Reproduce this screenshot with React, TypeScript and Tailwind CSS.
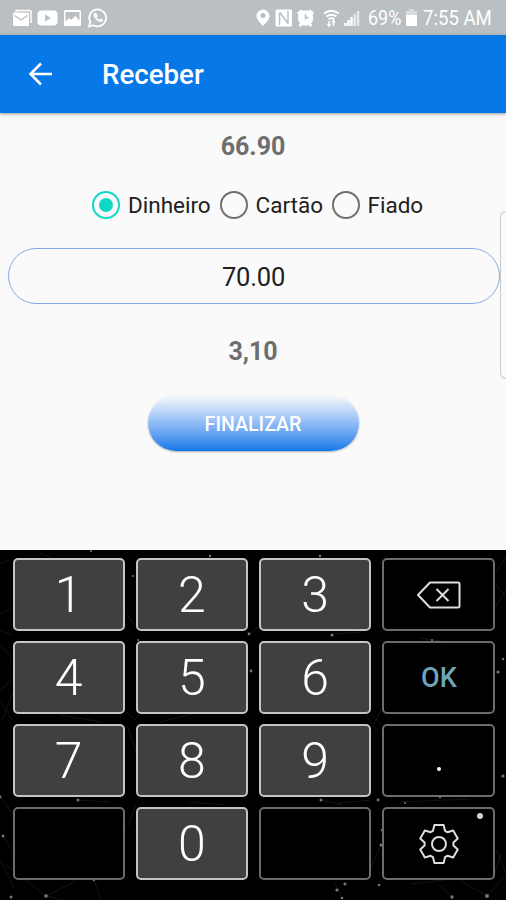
import type { ReactNode } from 'react';

// ────────────────────────────────────────────
// Status bar
// ────────────────────────────────────────────

function StatusBar() {
  return (
    <div className="flex h-[35px] shrink-0 items-center bg-[#babfc3] pl-3 text-white">
      <svg width="98" height="24" viewBox="0 0 98 24" className="shrink-0" fill="none">
        {/* mail */}
        <path d="M4 6V4.500h14q1 0 1 1V17" stroke="#fff" strokeWidth="1.500" />
        <rect x="1" y="6.500" width="16" height="13.500" rx="1" fill="#fff" />
        <path d="M2.500 9.500L9 14l6.500-4.500" stroke="#babfc3" strokeWidth="1.300" />
        {/* video */}
        <rect x="25.500" y="4.500" width="20" height="15" rx="4" fill="#fff" />
        <path d="M33 8.500v7l6-3.500z" fill="#babfc3" />
        {/* image */}
        <rect x="52" y="4" width="17" height="16" rx="1.500" fill="#fff" />
        <path d="M53.500 6h14v8.500l-4-4.500-4.500 4-2-2-3.500 3.500z" fill="#babfc3" />
        {/* chat */}
        <path d="M77 20.500l1.200-4.700A8.400 8.400 0 1 1 81.500 19.200z" stroke="#fff" strokeWidth="1.800" />
        <path
          d="M82.500 7c-2 1.400-.5 4.500 1.800 6.700 2.200 2 5 3.300 6.500 1.300.8-1.200-.2-1.800-2.300-2.500l-1.200 1.200c-1.300-.6-2-1.300-2.600-2.500l1-1.200c-.6-2-1.700-3.700-3.200-3z"
          fill="#fff"
        />
      </svg>
      <svg width="110" height="24" viewBox="0 0 110 24" className="ml-[144px] shrink-0" fill="none">
        {/* location */}
        <path d="M9 3.500a6.500 6.500 0 0 1 6.500 6.500c0 3.500-3.500 6.500-6.500 10-3-3.500-6.500-6.500-6.500-10A6.500 6.500 0 0 1 9 3.500z" fill="#fff" />
        <circle cx="9" cy="9.500" r="2.500" fill="#babfc3" />
        {/* nfc */}
        <rect x="21.500" y="3.500" width="16.500" height="17" rx="1.500" fill="#fff" />
        <path d="M25.500 19V6.500M34 17.500V5M26 6.500l8 11" stroke="#babfc3" strokeWidth="1.500" />
        {/* alarm */}
        <circle cx="51.500" cy="12" r="7.700" fill="#fff" />
        <path d="M43.800 8l4.500-3.500M59.200 8l-4.500-3.500M45.500 20l3-3M57.500 20l-3-3" stroke="#fff" strokeWidth="3" />
        <path d="M51.500 8v4.500l3-1.500" stroke="#babfc3" strokeWidth="1.500" />
        {/* wifi */}
        <path d="M70 7.500q7.500-5.500 15 0M72.500 10.500q5-3.600 10 0M74.500 13.300q3-2 6 0" stroke="#fff" strokeWidth="1.900" />
        <path d="M75 15v4.500M79.500 14.500v5.500M73.500 18l1.500 2 1.500-2M78 16.500l1.500-2 1.500 2" stroke="#fff" strokeWidth="1.400" />
        {/* signal */}
        <path d="M91.500 20v-3M94.500 20v-6M97.500 20v-9" stroke="#fff" strokeWidth="2.400" />
        <path d="M100.700 20V8M104 20V5" stroke="#fff" strokeOpacity=".65" strokeWidth="2.400" />
      </svg>
      <span className="ml-[4px] w-[35px] shrink-0 origin-left scale-x-[0.9] text-[20px] leading-none">69%</span>
      <svg width="11" height="18" viewBox="0 0 11 18" className="ml-[3px] shrink-0">
        <path d="M3 0h5v2h3v4H0V2h3z" fill="#fff" opacity=".45" />
        <path d="M0 6h11v11H0z" fill="#fff" />
      </svg>
      <span className="ml-[6px] origin-left scale-x-[0.93] whitespace-nowrap text-[20px] leading-none">7:55 AM</span>
    </div>
  );
}

// ────────────────────────────────────────────
// App bar
// ────────────────────────────────────────────

function AppBar() {
  return (
    <header className="z-10 flex h-[78px] shrink-0 items-center bg-[#0678e8] pl-[28px] text-white shadow-[0_1px_3px_rgba(0,0,0,0.4)]">
      <svg width="24" height="24" viewBox="0 0 24 24" fill="none" stroke="#fff" strokeWidth="2.600">
        <path d="M24 12H2.500M13 1.500L2.500 12 13 22.500" />
      </svg>
      <h1 className="ml-[50px] pt-[2px] text-[27.700px] font-medium leading-none">Receber</h1>
    </header>
  );
}

// ────────────────────────────────────────────
// Payment form
// ────────────────────────────────────────────

function Option({ label, checked, width }: { label: string; checked?: boolean; width: string }) {
  return (
    <label className={`flex items-center ${width}`}>
      <span
        className={`flex size-[28px] shrink-0 items-center justify-center rounded-full border-[2.500px] ${
          checked ? 'border-[#10d8c4]' : 'border-[#707070]'
        }`}
      >
        {checked && <span className="size-[14px] rounded-full bg-[#10d8c4]" />}
      </span>
      <span className="ml-[8px] pt-px text-[22.500px] leading-none text-[#202020]">{label}</span>
    </label>
  );
}

function PaymentForm() {
  return (
    <main className="relative flex h-[437px] shrink-0 flex-col items-center bg-[#fafafa]">
      <p className="mt-[21px] text-[25px] font-bold leading-[26px] text-[#6e6e6e]">66.90</p>
      <div className="mt-[31px] flex w-full pl-[92px]">
        <Option label="Dinheiro" width="w-[127.500px]" checked />
        <Option label="Cartão" width="w-[112px]" />
        <Option label="Fiado" width="w-[100px]" />
      </div>
      <div className="ml-px mt-[29px] flex h-[56px] w-[492px] items-center justify-center rounded-full border border-[#86aae8] pt-[3px] text-[25.500px] tracking-[-0.200px] text-[#202020]">
        70.00
      </div>
      <p className="mt-[35px] text-[25px] font-bold leading-[26px] text-[#6e6e6e]">3,10</p>
      <button className="mt-[30px] flex h-[56px] w-[211px] items-center justify-center rounded-full bg-linear-to-b from-[#fafafa] to-[#0678e8] pt-[3px] text-[19.600px] font-medium text-white shadow-[0_1px_2px_rgba(0,0,0,0.3)]">
        FINALIZAR
      </button>
      {/* edge panel handle */}
      <div className="absolute right-0 top-[98px] h-[168px] w-[6px] rounded-l-[6px] border border-r-0 border-[#c9c9c9] bg-[#fafafa]" />
    </main>
  );
}

// ────────────────────────────────────────────
// Keypad
// ────────────────────────────────────────────

const DUST = [
  [91, 1, 1], [210, 6, 1.2], [133, 26, 1], [249, 84, 1.400], [320, 6, 1.200], [332, 85, 1.500],
  [251, 121, 1.400], [498, 122, 1.600], [503, 109, 1.200], [138, 90, 1], [432, 90, 1], [78, 250, 1.500],
  [3, 286, 1.500], [0, 247, 1.400], [321, 250, 1.500], [378, 250, 1.400], [405, 253, 1], [440, 247, 1.200],
  [503, 226, 1.600], [381, 295, 1.500], [382, 280, 1.200], [46, 346, 1.800], [11, 347, 1.500], [94, 330, 1.200],
  [337, 340, 1.600], [345, 334, 1.500], [342, 348, 1.300], [379, 335, 1.300], [452, 347, 1.700], [487, 346, 2],
];

function Dust() {
  return (
    <svg className="absolute inset-0" width="506" height="350" fill="none">
      <path
        d="M0 14l9-4M0 64l12-5M0 80l13 5M0 95l12 13M0 140l13-11M0 152l12 18M2 171L13 142M496 23l10-16M495 58l11-18M496 35l10 12M0 245l13 20M3 286l9 14M0 310l14 28M46 346L5 314M46 346l17 4M46 346l30-15M94 330l7 20M127 64l8 12M126 162l10 8M128 276l8-22M372 165l12 13M374 174l8-15M378 182l-12-17M371 250l-33 3M321 250l22 5M332 84l30-2M249 84l9-7M40 3l17 7M190 252l35 3M78 250l32 2M381 295l-10 22M487 346l-26-15M487 346l19-21M452 347l-13-12M337 340l8-8M342 348l-8-17M496 300l10 23M501 304l-7 22M410 334l35-4M128 177l10 30M60 165l42 7M160 172l32-8M420 88l26 4M400 252l70-3"
        stroke="#fff"
        strokeOpacity=".08"
      />
      {DUST.map(([x, y, r]) => (
        <circle key={`${x}-${y}`} cx={x} cy={y} r={r} fill="#777" />
      ))}
    </svg>
  );
}

function Key({ children, light }: { children?: ReactNode; light?: boolean }) {
  return (
    <div
      className={`relative flex items-center justify-center rounded-[5px] border-2 text-[50px] font-light leading-none text-white ${
        light ? 'border-[#c4c4c4] bg-[#404040]' : 'border-[#6c6c6c] bg-black'
      }`}
    >
      {children}
    </div>
  );
}

// Six flat-topped teeth around the hub
const gearPoints = Array.from({ length: 6 }, (_, i) => {
  const a = (i * Math.PI) / 3;
  return [[-6, -13.2], [-4.6, -19], [4.6, -19], [6, -13.2]]
    .map(([x, y]) => `${x * Math.cos(a) - y * Math.sin(a)},${x * Math.sin(a) + y * Math.cos(a)}`)
    .join(' ');
}).join(' ');

function Keypad() {
  return (
    <div className="relative h-[350px] shrink-0 bg-black">
      <Dust />
      <div className="grid h-full grid-cols-4 grid-rows-[repeat(4,73px)] gap-x-[11px] gap-y-[10px] pl-[12.500px] pr-[11.500px] pt-[8px]">
        <Key light>1</Key>
        <Key light>2</Key>
        <Key light>3</Key>
        <Key>
          <svg width="46" height="30" viewBox="0 0 46 30" fill="none" stroke="#ddd" strokeWidth="2" className="ml-[2px]">
            <path d="M2 15L14 2.500h28q1.500 0 1.500 1.500v22q0 1.500-1.500 1.500H14z" strokeLinejoin="round" />
            <path d="M20.500 9l12 12M32.500 9L20.500 21" />
          </svg>
        </Key>
        <Key light>4</Key>
        <Key light>5</Key>
        <Key light>6</Key>
        <Key>
          <span className="pl-px pt-[2px] text-[27px] font-medium text-[#6fa5b8]">OK</span>
        </Key>
        <Key light>7</Key>
        <Key light>8</Key>
        <Key light>9</Key>
        <Key>
          <span className="ml-px mt-[16px] size-[4px] rounded-full bg-white" />
        </Key>
        <Key />
        <Key light>0</Key>
        <Key />
        <Key>
          <svg width="42" height="42" viewBox="-21 -21 42 42" fill="none" stroke="#ddd" strokeWidth="2" className="ml-px">
            <polygon points={gearPoints} strokeLinejoin="round" />
            <circle r="7" />
          </svg>
          <span className="absolute right-[10px] top-[4px] size-[6px] rounded-full bg-[#d4d4d4]" />
        </Key>
      </div>
    </div>
  );
}

// ────────────────────────────────────────────
// App root
// ────────────────────────────────────────────

export default function App() {
  return (
    <div className="flex h-[900px] w-[506px] flex-col overflow-hidden bg-[#fafafa] font-[Roboto,sans-serif]">
      <StatusBar />
      <AppBar />
      <PaymentForm />
      <Keypad />
    </div>
  );
}
